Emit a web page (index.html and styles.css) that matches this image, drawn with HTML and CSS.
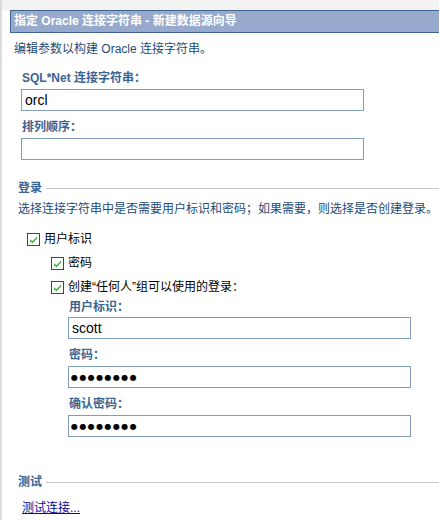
FILE: index.html
```html
<!DOCTYPE html>
<html lang="zh">
<head>
<meta charset="utf-8">
<title>指定 Oracle 连接字符串</title>
<link rel="stylesheet" href="styles.css">
</head>
<body>
<div class="page">
  <div class="topstrip"></div>
  <div class="main">
    <div class="header">指定 Oracle 连接字符串 - 新建数据源向导</div>
    <p class="desc">编辑参数以构建 Oracle 连接字符串。</p>

    <div class="field f-sql">
      <label class="lbl">SQL*Net 连接字符串：</label>
      <input class="txt" type="text" value="orcl">
    </div>
    <div class="field f-sort">
      <label class="lbl">排列顺序：</label>
      <input class="txt" type="text" value="">
    </div>

    <div class="section s-login"><span>登录</span></div>
    <p class="note">选择连接字符串中是否需要用户标识和密码；如果需要，则选择是否创建登录。</p>

    <div class="check c-user"><span class="box"><svg viewBox="0 0 13 13" width="13" height="13"><rect x="0.5" y="0.5" width="12" height="12" fill="#fff" stroke="#1c5180"/><path d="M3 6.2 L5.3 8.6 L10 3.8 L10 5.6 L5.3 10.3 L3 8 Z" fill="#21a121"/></svg></span>用户标识</div>
    <div class="check c-pw"><span class="box"><svg viewBox="0 0 13 13" width="13" height="13"><rect x="0.5" y="0.5" width="12" height="12" fill="#fff" stroke="#1c5180"/><path d="M3 6.2 L5.3 8.6 L10 3.8 L10 5.6 L5.3 10.3 L3 8 Z" fill="#21a121"/></svg></span>密码</div>
    <div class="check c-pw"><span class="box"><svg viewBox="0 0 13 13" width="13" height="13"><rect x="0.5" y="0.5" width="12" height="12" fill="#fff" stroke="#1c5180"/><path d="M3 6.2 L5.3 8.6 L10 3.8 L10 5.6 L5.3 10.3 L3 8 Z" fill="#21a121"/></svg></span>创建“任何人”组可以使用的登录：</div>

    <div class="login">
      <div class="field f-uid">
        <label class="lbl">用户标识：</label>
        <input class="txt" type="text" value="scott">
      </div>
      <div class="field f-p">
        <label class="lbl">密码：</label>
        <div class="txt dots">●●●●●●●●</div>
      </div>
      <div class="field f-p">
        <label class="lbl">确认密码：</label>
        <div class="txt dots">●●●●●●●●</div>
      </div>
    </div>

    <div class="section s-test"><span>测试</span></div>
    <a class="link" href="#">测试连接...</a>
  </div>
</div>
</body>
</html>
```
FILE: styles.css
```css
html, body {
  margin: 0;
  padding: 0;
  background: #fff;
}
body {
  font-family: "Liberation Sans", "Noto Sans CJK SC", sans-serif;
  font-size: 12px;
  color: #000;
}
.page {
  width: 439px;
  height: 520px;
  overflow: hidden;
  border-left: 2px solid #dcdcdc;
  box-sizing: border-box;
}
.topstrip {
  height: 10px;
  background: #f3f3f3;
  margin-left: -2px;
}
.main {
  padding-left: 8px;
}
.header {
  height: 21px;
  line-height: 21px;
  background: #97a9cc;
  border: 1px solid #41638f;
  border-right: none;
  color: #fff;
  font-weight: bold;
  padding-left: 3px;
}
.desc {
  margin: 8px 0 0 4px;
  line-height: 16px;
  color: #254a74;
}
.field {
  display: flex;
  flex-direction: column;
  align-items: flex-start;
}
.f-sql { margin: 13px 0 0 11px; }
.f-sort { margin: 8px 0 0 11px; }
.lbl {
  line-height: 16px;
  font-weight: bold;
  color: #3b6592;
  margin-left: 1px;
}
.txt {
  box-sizing: border-box;
  width: 343px;
  height: 22px;
  margin: 3px 0 0 0;
  border: 1px solid #7f9db9;
  padding: 0 0 0 3px;
  font-family: "Liberation Sans", "Noto Sans CJK SC", sans-serif;
  font-size: 14px;
  color: #000;
  background: #fff;
  outline: none;
}
.dots {
  display: flex;
  align-items: center;
  font-family: "DejaVu Sans", sans-serif;
  font-size: 8px;
  letter-spacing: 1.4px;
  padding-left: 2px;
}
.section {
  display: flex;
  align-items: center;
  margin-left: 8px;
  line-height: 16px;
  font-weight: bold;
  color: #3b6592;
}
.section::after {
  content: "";
  flex: 1;
  height: 1px;
  background: #c6c6c6;
  margin-left: 4px;
}
.s-login { margin-top: 20px; }
.s-test { margin-top: 37px; }
.note {
  margin: 5px 0 0 8px;
  line-height: 16px;
  color: #254a74;
  white-space: nowrap;
}
.check {
  display: flex;
  align-items: center;
  line-height: 16px;
}
.box {
  display: inline-flex;
  width: 13px;
  height: 13px;
  margin-right: 4px;
}
.c-user { margin: 14px 0 0 17px; }
.c-pw { margin: 8px 0 0 41px; }
.login {
  margin-left: 58px;
}
.f-uid { margin-top: 4px; }
.f-uid .txt { margin-top: 2px; }
.f-p { margin-top: 8px; }
.link {
  display: inline-block;
  margin: 10px 0 0 12px;
  line-height: 16px;
  color: #0a0a96;
  text-decoration: underline;
}
```
